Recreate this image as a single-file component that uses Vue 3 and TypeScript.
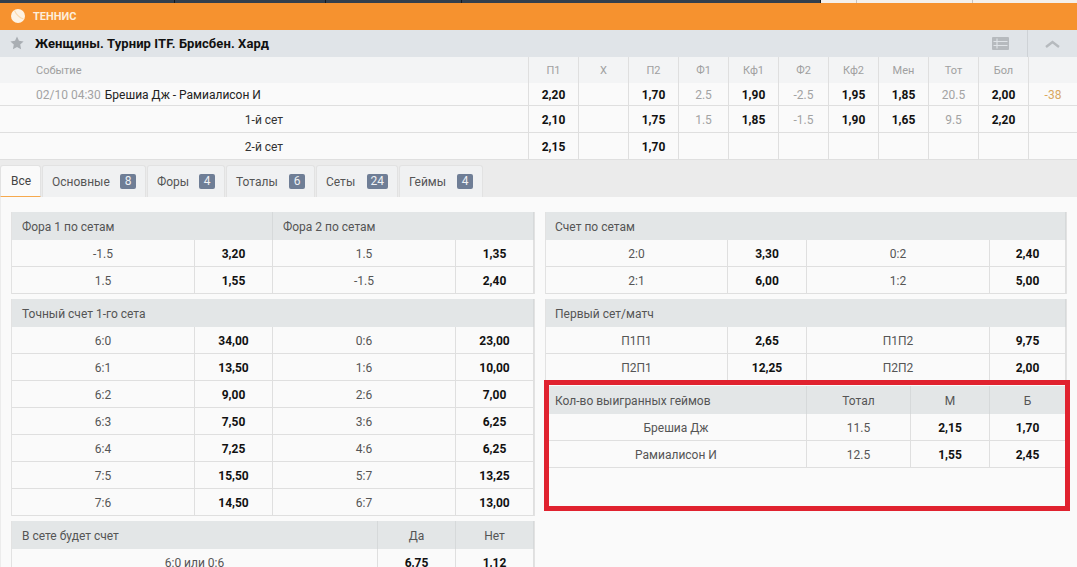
<script setup lang="ts">
interface HeadCell {
  text: string;
  span?: number;
  center?: boolean;
}

interface Market {
  cols: string;
  head: HeadCell[];
  rows: string[][];
}

const eventHead = ["П1", "Х", "П2", "Ф1", "Кф1", "Ф2", "Кф2", "Мен", "Тот", "Бол", ""];

const eventRows = [
  { name: "", date: "02/10 04:30", title: "Брешиа Дж - Рамиалисон И", cells: ["2,20", "", "1,70", "2.5", "1,90", "-2.5", "1,95", "1,85", "20.5", "2,00", "-38"] },
  { name: "1-й сет", date: "", title: "", cells: ["2,10", "", "1,75", "1.5", "1,85", "-1.5", "1,90", "1,65", "9.5", "2,20", ""] },
  { name: "2-й сет", date: "", title: "", cells: ["2,15", "", "1,70", "", "", "", "", "", "", "", ""] },
];

const tabs = [
  { label: "Все", count: 0, width: 41 },
  { label: "Основные", count: 8, width: 104 },
  { label: "Форы", count: 4, width: 78 },
  { label: "Тоталы", count: 6, width: 89 },
  { label: "Сеты", count: 24, width: 82 },
  { label: "Геймы", count: 4, width: 84 },
];

const topSegments = [175, 151, 136, 359];

const leftMarkets: Market[] = [
  {
    cols: "four",
    head: [
      { text: "Фора 1 по сетам", span: 2 },
      { text: "Фора 2 по сетам", span: 2 },
    ],
    rows: [
      ["-1.5", "3,20", "1.5", "1,35"],
      ["1.5", "1,55", "-1.5", "2,40"],
    ],
  },
  {
    cols: "four",
    head: [{ text: "Точный счет 1-го сета", span: 4 }],
    rows: [
      ["6:0", "34,00", "0:6", "23,00"],
      ["6:1", "13,50", "1:6", "10,00"],
      ["6:2", "9,00", "2:6", "7,00"],
      ["6:3", "7,50", "3:6", "6,25"],
      ["6:4", "7,25", "4:6", "6,25"],
      ["7:5", "15,50", "5:7", "13,25"],
      ["7:6", "14,50", "6:7", "13,00"],
    ],
  },
  {
    cols: "three",
    head: [
      { text: "В сете будет счет" },
      { text: "Да", center: true },
      { text: "Нет", center: true },
    ],
    rows: [["6:0 или 0:6", "6,75", "1,12"]],
  },
];

const rightMarkets: Market[] = [
  {
    cols: "four-right",
    head: [{ text: "Счет по сетам", span: 4 }],
    rows: [
      ["2:0", "3,30", "0:2", "2,40"],
      ["2:1", "6,00", "1:2", "5,00"],
    ],
  },
  {
    cols: "four-right",
    head: [{ text: "Первый сет/матч", span: 4 }],
    rows: [
      ["П1П1", "2,65", "П1П2", "9,75"],
      ["П2П1", "12,25", "П2П2", "2,00"],
    ],
  },
  {
    cols: "games",
    head: [
      { text: "Кол-во выигранных геймов" },
      { text: "Тотал", center: true },
      { text: "М", center: true },
      { text: "Б", center: true },
    ],
    rows: [
      ["Брешиа Дж", "11.5", "2,15", "1,70"],
      ["Рамиалисон И", "12.5", "1,55", "2,45"],
    ],
  },
];

const isOdd = (text: string) => /^\d+,\d+$/.test(text);
</script>

<template>
  <div class="page">
    <div class="top-strip">
      <span v-for="w in topSegments" :key="w" class="segment" :style="{ width: w + 'px' }"></span>
      <span class="segment light" style="width: 36px"></span>
      <span class="segment light" style="width: 116px"></span>
      <span class="segment light last"></span>
    </div>

    <div class="sport-bar">
      <svg class="ball" width="14" height="14" viewBox="0 0 14 14">
        <circle cx="7" cy="7" r="7" fill="#fdf3e4" />
        <path d="M3.5 1.5C5 5 8 8.5 12.5 10" fill="none" stroke="#fad9ae" stroke-width="1.1" />
      </svg>
      <span class="sport-name">ТЕННИС</span>
    </div>

    <div class="league-bar">
      <svg class="star" width="14" height="14" viewBox="0 0 24 24">
        <path d="M12 1l3.4 7.3 7.9 1-5.8 5.4 1.5 7.9L12 18.7l-7 3.9 1.5-7.9L.7 9.3l7.9-1z" fill="#a9aeb3" />
      </svg>
      <span class="league-name">Женщины. Турнир ITF. Брисбен. Хард</span>
      <div class="league-icon list">
        <svg width="17" height="13" viewBox="0 0 17 13">
          <rect width="17" height="13" rx="1" fill="#b6babe" />
          <path d="M1.5 4.5h14M1.5 8.5h14M5 1.5v10" stroke="#e0e4e8" stroke-width="1.1" />
        </svg>
      </div>
      <div class="league-icon chevron">
        <svg width="15" height="8" viewBox="0 0 15 8">
          <path d="M1 7l6.5-5L14 7" fill="none" stroke="#b6babe" stroke-width="2.4" />
        </svg>
      </div>
    </div>

    <div class="event-table">
      <div class="event-row head">
        <div class="event-name">Событие</div>
        <div v-for="(h, i) in eventHead" :key="i" class="cell">{{ h }}</div>
      </div>
      <div v-for="(row, r) in eventRows" :key="r" class="event-row" :class="'row-' + r">
        <div class="event-name" :class="{ centered: row.name }">
          <template v-if="row.name">{{ row.name }}</template>
          <template v-else>
            <span class="date">{{ row.date }}</span>
            <span class="title">{{ row.title }}</span>
          </template>
        </div>
        <div
          v-for="(c, i) in row.cells"
          :key="i"
          class="cell"
          :class="{ odd: isOdd(c), diff: i === 10, param: !isOdd(c) && i !== 10 }"
        >
          {{ c }}
        </div>
      </div>
    </div>

    <div class="tabs">
      <div
        v-for="(tab, i) in tabs"
        :key="tab.label"
        class="tab"
        :class="{ active: i === 0 }"
        :style="{ width: tab.width + 'px' }"
      >
        {{ tab.label }}
        <span v-if="tab.count" class="badge">{{ tab.count }}</span>
      </div>
    </div>

    <div class="markets">
      <div v-for="(group, g) in [leftMarkets, rightMarkets]" :key="g" class="market-col">
        <div v-for="m in group" :key="m.head[0].text" class="market" :class="m.cols">
          <div
            v-for="h in m.head"
            :key="h.text"
            class="market-head"
            :class="{ center: h.center }"
            :style="h.span ? { gridColumn: 'span ' + h.span } : undefined"
          >
            {{ h.text }}
          </div>
          <template v-for="(row, r) in m.rows" :key="r">
            <div v-for="(c, i) in row" :key="i" class="market-cell" :class="{ odd: isOdd(c) }">{{ c }}</div>
          </template>
        </div>
      </div>
      <div class="highlight"></div>
    </div>
  </div>
</template>

<style scoped>
.page {
  width: 1077px;
  font-family: Roboto, "Liberation Sans", sans-serif;
  font-size: 12px;
  color: #222;
  background: #fafafa;
}

.top-strip {
  display: flex;
  height: 3px;
  background: #333f4d;
}

.segment {
  box-sizing: border-box;
  border-right: 1px solid #15191f;
}

.segment.light {
  background: #f4f0ec;
  border-right-color: #c8c4c0;
}

.segment.last {
  flex: 1;
  border-right: none;
}

.sport-bar {
  display: flex;
  align-items: center;
  height: 27px;
  padding-left: 11px;
  background: #f6922f;
}

.ball {
  margin-top: -1px;
}

.sport-name {
  margin-left: 8px;
  font-size: 11px;
  font-weight: 700;
  color: #fdeedb;
}

.league-bar {
  display: flex;
  align-items: center;
  height: 27px;
  padding-left: 10px;
  background: #e0e4e8;
}

.star {
  margin-top: -1px;
}

.league-name {
  margin-left: 11px;
  font-size: 13px;
  font-weight: 700;
  letter-spacing: 0.1px;
  color: #111;
}

.league-icon {
  display: flex;
  align-items: center;
  justify-content: center;
  height: 100%;
}

.league-icon.list {
  margin-left: auto;
  width: 49px;
  padding-right: 5px;
  box-sizing: border-box;
}

.league-icon.chevron {
  width: 49px;
  border-left: 1px solid #ced2d6;
}

.event-table {
  background: #fafafa;
}

.event-row {
  display: grid;
  grid-template-columns: 528px repeat(10, 50px) 49px;
  height: 27px;
  box-sizing: border-box;
  border-bottom: 1px solid #dfdfdf;
}

.event-row.head {
  height: 26px;
  background: #f3f4f5;
  border-bottom: none;
  color: #a0a0a0;
  font-size: 11px;
}

.event-row.row-0 {
  height: 23px;
}

.event-name {
  display: flex;
  align-items: center;
  padding-left: 36px;
}

.event-row.row-0 .event-name {
  padding-top: 1px;
}

.event-name.centered {
  justify-content: center;
  padding-left: 0;
  padding-top: 2px;
  color: #333;
}

.date {
  color: #a3a3a3;
}

.title {
  margin-left: 4px;
  color: #222;
}

.cell {
  display: flex;
  align-items: center;
  justify-content: center;
  border-left: 1px solid #dfdfdf;
}

.event-row:not(.head) .cell {
  padding-top: 1px;
}

.cell.param {
  color: #a3a3a3;
}

.cell.diff {
  color: #d9a860;
}

.odd {
  font-weight: 700;
  color: #111;
}

.tabs {
  display: flex;
  height: 37px;
  box-sizing: border-box;
  padding-top: 5px;
  background: #ebebeb;
}

.tab {
  display: flex;
  align-items: center;
  justify-content: space-between;
  box-sizing: border-box;
  height: 32px;
  margin-right: 1px;
  padding: 0 9px;
  background: #f0f1f2;
  border: 1px solid #e2e2e2;
  border-bottom: none;
  border-radius: 3px 3px 0 0;
  color: #555;
}

.tab.active {
  padding-left: 10px;
  background: #fafafa;
  border-bottom: 1px solid #f6a94e;
  color: #444;
}

.badge {
  min-width: 16px;
  padding: 0 4px;
  box-sizing: border-box;
  height: 15px;
  border-radius: 2px;
  background: #6f7e96;
  color: #f0f2f5;
  font-size: 12px;
  line-height: 15px;
  text-align: center;
}

.markets {
  position: relative;
  display: flex;
  gap: 10px;
  height: 370px;
  overflow: hidden;
  padding: 15px 10px 0 11px;
  border-left: 1px solid #ececec;
  box-sizing: border-box;
}

.market-col {
  display: flex;
  flex-direction: column;
  gap: 5px;
}

.market-col:first-child {
  margin-left: -1px;
  width: 524px;
}

.market-col:nth-child(2) {
  width: 522px;
}

.market {
  display: grid;
  border-left: 1px solid #e2e2e2;
  border-right: 1px solid #e2e2e2;
}

.market.four {
  grid-template-columns: 183px 78px 183px 1fr;
}

.market.four-right {
  grid-template-columns: 182px 79px 183px 1fr;
}

.market.three {
  grid-template-columns: 366px 78px 1fr;
}

.market.games {
  grid-template-columns: 261px 104px 79px 1fr;
}

.market-head {
  display: flex;
  align-items: center;
  height: 28px;
  box-sizing: border-box;
  padding: 1px 0 0 10px;
  background: #e3e6e7;
  border-right: 1px solid #d6d9da;
  color: #555;
}

.market-col:nth-child(2) .market-head {
  padding-left: 9px;
}

.market-head:last-of-type {
  border-right: none;
}

.market-col .market-head.center {
  justify-content: center;
  padding-left: 0;
}

.market-cell {
  display: flex;
  align-items: center;
  justify-content: center;
  height: 27px;
  box-sizing: border-box;
  padding-top: 1px;
  border-right: 1px solid #dfdfdf;
  border-bottom: 1px solid #dfdfdf;
  color: #555;
}

.market-cell.odd {
  color: #111;
}

.highlight {
  position: absolute;
  left: 543px;
  top: 183px;
  width: 526px;
  height: 131px;
  box-sizing: border-box;
  border: 5px solid #e0222f;
}
</style>

<style>
html,
body {
  overflow: hidden;
}
</style>
